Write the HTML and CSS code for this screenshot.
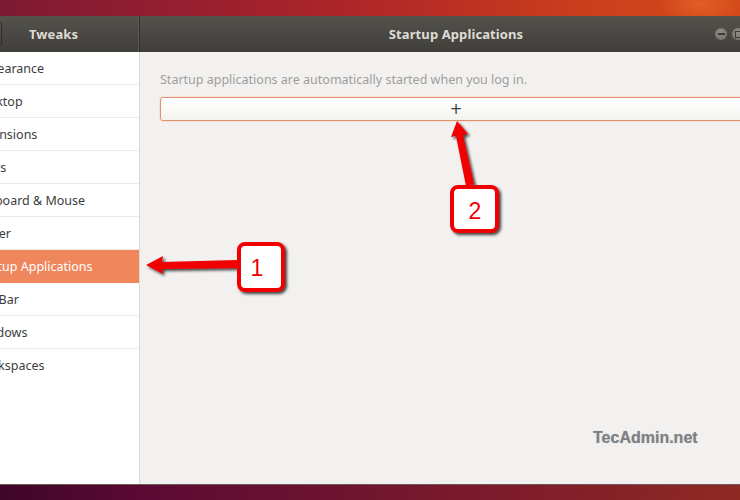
FILE: index.html
```html
<!DOCTYPE html>
<html>
<head>
<meta charset="utf-8">
<link rel="stylesheet" href="styles.css">
</head>
<body>
<div class="screen">
  <div class="wall-top"></div>
  <div class="window">
    <div class="header">
      <div class="head-side">
        <div class="back-btn"></div>
        <span class="head-title">Tweaks</span>
      </div>
      <div class="head-main">
        <span class="head-title">Startup Applications</span>
        <div class="wm-buttons">
          <span class="wm-btn"><span class="wm-min"></span></span>
          <span class="wm-btn"><span class="wm-max"></span></span>
        </div>
      </div>
    </div>
    <div class="body">
      <ul class="sidebar">
        <li class="row">Appearance</li>
        <li class="row">Desktop</li>
        <li class="row">Extensions</li>
        <li class="row">Fonts</li>
        <li class="row">Keyboard &amp; Mouse</li>
        <li class="row">Power</li>
        <li class="row selected">Startup Applications</li>
        <li class="row">Top Bar</li>
        <li class="row">Windows</li>
        <li class="row last">Workspaces</li>
      </ul>
      <div class="content">
        <p class="desc">Startup applications are automatically started when you log in.</p>
        <div class="add-btn">+</div>
        <div class="spacer"></div>
        <div class="watermark">TecAdmin.net</div>
      </div>
    </div>
  </div>
  <div class="wall-bottom"></div>

  <svg class="annot" width="740" height="500" viewBox="0 0 740 500">
    <defs>
      <filter id="sh" x="-30%" y="-30%" width="160%" height="160%">
        <feGaussianBlur in="SourceAlpha" stdDeviation="1.6"/>
        <feOffset dx="2" dy="2" result="b"/>
        <feComponentTransfer><feFuncA type="linear" slope="0.75"/></feComponentTransfer>
        <feMerge><feMergeNode/><feMergeNode in="SourceGraphic"/></feMerge>
      </filter>
    </defs>
    <g filter="url(#sh)">
      <path d="M146 265 L163 256 L162 262 L238 260 L238 268 L162 269 L163 274 Z" fill="#f00000"/>
      <rect x="239" y="244" width="44" height="46" rx="6" fill="#fff" stroke="#f00000" stroke-width="4"/>
      <path d="M457 121 L468 134 L463 135 L474 184 L466 186 L456 136 L451 137 Z" fill="#f00000"/>
      <rect x="452" y="187" width="45" height="44" rx="6" fill="#fff" stroke="#f00000" stroke-width="4"/>
    </g>
    <text x="257" y="276" class="num">1</text>
    <text x="475" y="219" class="num">2</text>
  </svg>
</div>
</body>
</html>
```
FILE: styles.css
```css
html, body {
  margin: 0;
  padding: 0;
}
body {
  width: 740px;
  height: 500px;
  overflow: hidden;
  font-family: "Noto Sans", "Open Sans", sans-serif;
}
.screen {
  position: relative;
  width: 740px;
  height: 500px;
  overflow: hidden;
  display: flex;
  flex-direction: column;
}
.wall-top {
  height: 16px;
  flex: none;
  background:
    radial-gradient(ellipse 60px 30px at 700px 4px, rgba(255,140,60,0.35), transparent 70%),
    linear-gradient(90deg, #7c1a33 0%, #9c1f2e 30%, #b52a26 55%, #cc3f1c 80%, #d4491a 100%);
}
.wall-bottom {
  height: 16px;
  flex: none;
  background: linear-gradient(90deg, #3e0628 0%, #5c0a33 20%, #6e1330 45%, #7e1c2a 70%, #8e2a24 100%);
  border-top: 1px solid #6a5a5a;
  box-sizing: border-box;
}
.window {
  flex: 1;
  width: 810px;
  margin-left: -38px;
  display: flex;
  flex-direction: column;
  min-height: 0;
}
.header {
  height: 36px;
  flex: none;
  display: flex;
  background: linear-gradient(#54524d, #3f3e3a);
  color: #dfdbd2;
  font-weight: bold;
  font-size: 13px;
}
.head-side {
  width: 177px;
  flex: none;
  border-right: 1px solid #2f2e2b;
  box-shadow: inset -1px 0 0 #5e5c56;
  display: flex;
  align-items: center;
  position: relative;
}
.back-btn {
  width: 38px;
  height: 26px;
  margin-left: 2px;
  border: 1px solid #2d2c29;
  border-radius: 4px;
  background: linear-gradient(#55534e, #47453f);
  box-sizing: border-box;
}
.head-side .head-title {
  margin-left: 27px;
}
.head-main {
  flex: 1;
  display: flex;
  align-items: center;
  justify-content: center;
  position: relative;
}
.head-title {
  letter-spacing: 0.1px;
}
.wm-buttons {
  position: absolute;
  left: 574px;
  top: 11px;
  display: flex;
  gap: 3px;
}
.wm-btn {
  width: 14px;
  height: 14px;
  border-radius: 50%;
  background: radial-gradient(circle at 50% 35%, #908d86, #6c6a64);
  box-shadow: inset 0 0 0 1px #45443f;
  display: flex;
  align-items: center;
  justify-content: center;
}
.wm-min {
  width: 7px;
  height: 2px;
  background: #3c3b37;
}
.wm-max {
  width: 5px;
  height: 5px;
  border: 1px solid #3c3b37;
}
.body {
  flex: 1;
  display: flex;
  min-height: 0;
}
.sidebar {
  width: 177px;
  flex: none;
  margin: 0;
  padding: 0;
  list-style: none;
  background: #ffffff;
  border-right: 1px solid #dcdad5;
}
.row {
  height: 33px;
  box-sizing: border-box;
  padding-left: 12px;
  display: flex;
  align-items: center;
  font-size: 12.5px;
  color: #3c3c3c;
  border-bottom: 1px solid #ebebea;
}
.row.last {
  border-bottom: none;
}
.row.selected {
  background: #f0865b;
  color: #ffffff;
  border-bottom-color: #f0865b;
}
.content {
  flex: 1;
  background: #f2f1f0;
  padding: 0 20px 0 20px;
  display: flex;
  flex-direction: column;
}
.desc {
  margin: 19px 0 0 0;
  font-size: 12.5px;
  color: #a09e9b;
  line-height: 17px;
}
.add-btn {
  margin-top: 9px;
  height: 24px;
  box-sizing: border-box;
  border: 1px solid #e3906e;
  border-radius: 3px;
  background: linear-gradient(#ffffff, #f4f3f1);
  box-shadow: 0 0 0 1px rgba(240,140,100,0.15);
  display: flex;
  align-items: center;
  justify-content: center;
  font-size: 15px;
  color: #3c3c3c;
  line-height: 1;
  font-family: "DejaVu Sans", sans-serif;
}
.spacer {
  flex: 1;
}
.watermark {
  align-self: flex-start;
  margin-left: 433px;
  margin-bottom: 37px;
  font-family: "Liberation Sans", sans-serif;
  font-weight: bold;
  font-size: 16px;
  line-height: 18px;
  color: #7e8084;
  text-shadow: 0 0 1px rgba(120,120,120,0.5);
}
.annot {
  position: absolute;
  left: 0;
  top: 0;
}
.num {
  font-family: "Liberation Sans", sans-serif;
  font-size: 23px;
  fill: #f00000;
  text-anchor: middle;
}
```
